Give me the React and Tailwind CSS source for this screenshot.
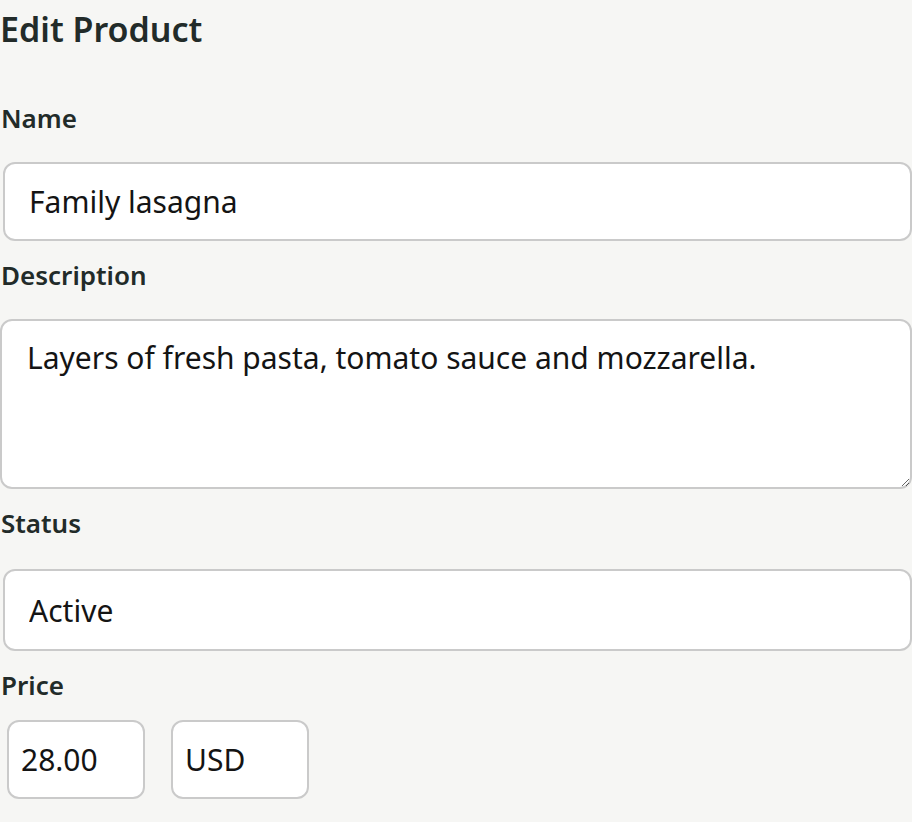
import React from 'react'

const field =
  'block bg-white border-2 border-[#cacaca] rounded-[12px] text-[30px] text-[#141414] outline-none'

const label = 'block mt-[21px] pl-[1px] text-[26px] leading-none font-semibold'

export default function App() {
  return (
    <div className="min-h-screen bg-[#f6f6f4] overflow-hidden font-['Noto_Sans','Open_Sans',sans-serif] text-[#222b29]">
      <h1 className="pt-[12px] text-[34px] leading-none font-semibold">Edit Product</h1>

      <label className={`${label} !mt-[59px]`}>Name</label>
      <input
        className={`${field} mt-[31px] ml-[3px] w-[909px] h-[79px] px-[24px]`}
        defaultValue="Family lasagna"
      />

      <label className={label}>Description</label>
      <textarea
        className={`${field} mt-[31px] w-[912px] h-[170px] px-[25px] pt-[17px] leading-[40px]`}
        defaultValue="Layers of fresh pasta, tomato sauce and mozzarella."
      />

      <label className={label}>Status</label>
      <input
        className={`${field} mt-[33px] ml-[3px] w-[909px] h-[82px] px-[24px]`}
        defaultValue="Active"
      />

      <label className={label}>Price</label>
      <div className="flex gap-[26px] mt-[22px] ml-[7px] pb-[22px]">
        <input className={`${field} w-[138px] h-[79px] px-[12px]`} defaultValue="28.00" />
        <input className={`${field} w-[138px] h-[79px] px-[12px]`} defaultValue="USD" />
      </div>
    </div>
  )
}
